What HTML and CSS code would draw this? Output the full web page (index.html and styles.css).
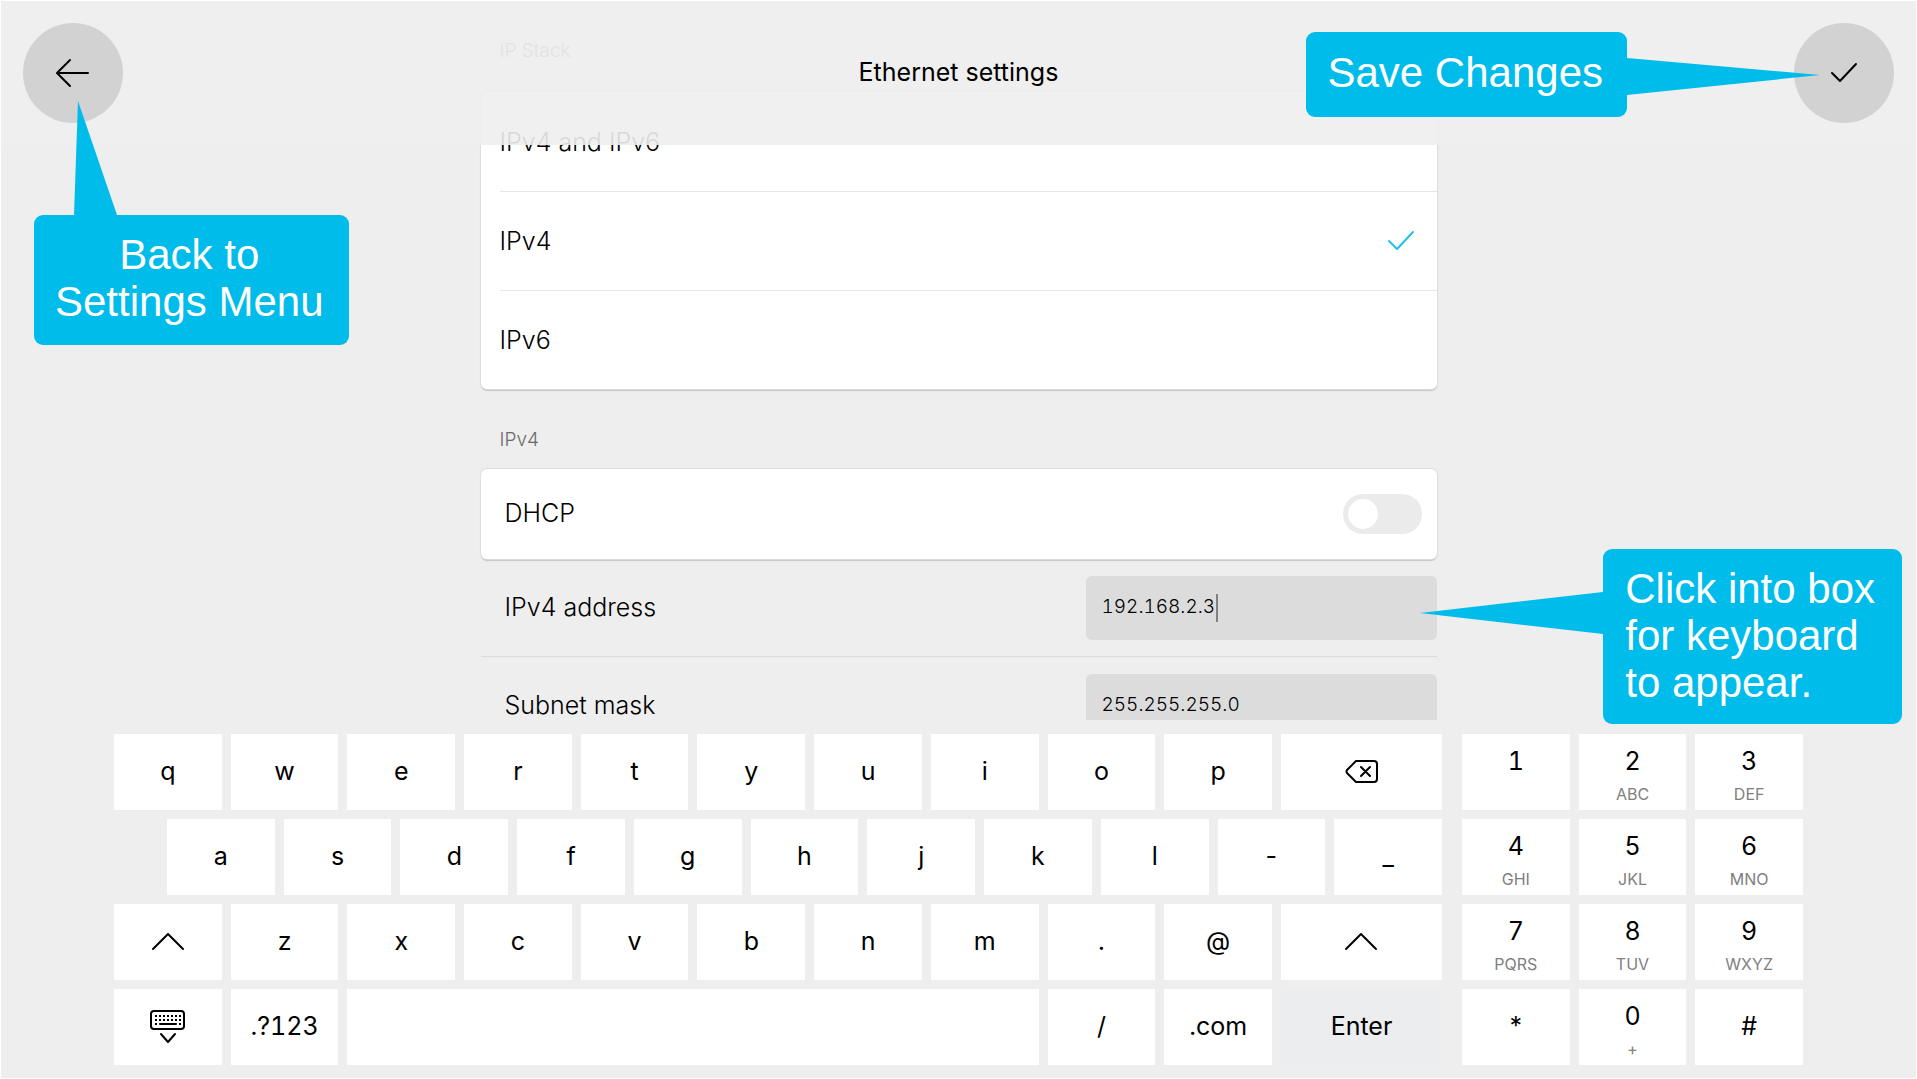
FILE: index.html
```html
<!DOCTYPE html>
<html lang="en">
<head>
<meta charset="utf-8">
<meta name="viewport" content="width=device-width, initial-scale=1">
<title>Ethernet settings</title>
<link rel="stylesheet" href="styles.css">
</head>
<body>
<div class="screen">
  <header class="topbar">
    <button class="round-button" type="button" aria-label="Back">
      <svg class="icon" width="40" height="40" viewBox="0 0 40 40"><path d="M35 20H5M17 7L4 20l13 13"/></svg>
    </button>
    <h1 class="title">Ethernet settings</h1>
    <button class="round-button" type="button" aria-label="Save">
      <svg class="icon" width="40" height="40" viewBox="0 0 40 40"><path d="M8 20l8 8L32 11"/></svg>
    </button>
  </header>

  <main class="settings">
    <form class="column">
      <h2 class="group-label">IP Stack</h2>
      <div class="card choices">
        <label class="choice"><input class="hidden-input" type="radio" name="stack"><span class="choice-text">IPv4 and IPv6</span></label>
        <label class="choice"><input class="hidden-input" type="radio" name="stack" checked><span class="choice-text">IPv4</span>
          <svg class="icon tick" width="40" height="40" viewBox="0 0 40 40"><path d="M8 20l8 8L32 11"/></svg></label>
        <label class="choice"><input class="hidden-input" type="radio" name="stack"><span class="choice-text">IPv6</span></label>
      </div>
      <h2 class="group-label">IPv4</h2>
      <div class="card toggle-row">
        <label class="row-label" for="dhcp">DHCP</label>
        <input class="toggle" id="dhcp" type="checkbox">
      </div>
      <div class="field-row">
        <label class="row-label" for="address">IPv4 address</label>
        <div class="field"><input class="field-input" id="address" type="text" value="192.168.2.3"><span class="caret"></span></div>
      </div>
      <div class="field-row">
        <label class="row-label" for="mask">Subnet mask</label>
        <div class="field"><input class="field-input" id="mask" type="text" value="255.255.255.0"></div>
      </div>
    </form>
  </main>

  <section class="keyboard" aria-label="Keyboard">
    <div class="letters">
      <div class="key-row">
        <button class="key">q</button><button class="key">w</button><button class="key">e</button><button class="key">r</button><button class="key">t</button><button class="key">y</button><button class="key">u</button><button class="key">i</button><button class="key">o</button><button class="key">p</button>
        <button class="key" aria-label="Backspace"><svg class="icon" width="40" height="40" viewBox="0 0 40 40"><path d="M15 10H33a3 3 0 0 1 3 3V28a3 3 0 0 1-3 3H15L6 22Q5 20.500 6 19ZM20 16l9 9M29 16L20 25"/></svg></button>
      </div>
      <div class="key-row key-row-inset">
        <button class="key">a</button><button class="key">s</button><button class="key">d</button><button class="key">f</button><button class="key">g</button><button class="key">h</button><button class="key">j</button><button class="key">k</button><button class="key">l</button><button class="key">-</button><button class="key">_</button>
      </div>
      <div class="key-row">
        <button class="key" aria-label="Shift"><svg class="icon" width="40" height="40" viewBox="0 0 40 40"><path d="M5 28L20 13l15 15"/></svg></button>
        <button class="key">z</button><button class="key">x</button><button class="key">c</button><button class="key">v</button><button class="key">b</button><button class="key">n</button><button class="key">m</button><button class="key">.</button><button class="key">@</button>
        <button class="key" aria-label="Shift"><svg class="icon" width="40" height="40" viewBox="0 0 40 40"><path d="M5 28L20 13l15 15"/></svg></button>
      </div>
      <div class="key-row">
        <button class="key" aria-label="Hide keyboard"><svg class="icon" width="40" height="40" viewBox="0 0 40 40"><rect x="3" y="5" width="33" height="18" rx="3"/><path d="M13 28l7 8 7-8M12 18H28"/><path class="dots" d="M7 10H34M7 14H34M7 18H10M31 18H34"/></svg></button>
        <button class="key">.?123</button><button class="key key-space" aria-label="Space"></button><button class="key">/</button><button class="key">.com</button><button class="key key-enter">Enter</button>
      </div>
    </div>
    <div class="numbers">
      <button class="key key-number">1</button>
      <button class="key key-number">2<small class="sub">ABC</small></button>
      <button class="key key-number">3<small class="sub">DEF</small></button>
      <button class="key key-number">4<small class="sub">GHI</small></button>
      <button class="key key-number">5<small class="sub">JKL</small></button>
      <button class="key key-number">6<small class="sub">MNO</small></button>
      <button class="key key-number">7<small class="sub">PQRS</small></button>
      <button class="key key-number">8<small class="sub">TUV</small></button>
      <button class="key key-number">9<small class="sub">WXYZ</small></button>
      <button class="key">*</button>
      <button class="key key-number">0<small class="sub">+</small></button>
      <button class="key">#</button>
    </div>
  </section>

  <aside class="callout callout-back">Back to<br>Settings Menu
    <svg class="tail" width="43" height="114" viewBox="0 0 43 114"><path d="M0 114L4 0 43 114Z"/></svg></aside>
  <aside class="callout callout-save">Save Changes
    <svg class="tail" width="193" height="37" viewBox="0 0 193 37"><path d="M0 0L193 17 0 37Z"/></svg></aside>
  <aside class="callout callout-box">Click into box<br>for keyboard<br>to appear.
    <svg class="tail" width="183" height="42" viewBox="0 0 183 42"><path d="M183 0L0 21 183 42Z"/></svg></aside>
</div>
</body>
</html>
```
FILE: styles.css
```css
* { box-sizing: border-box; }

body {
  margin: 0;
  background: #eee;
  color: #000;
  font: 300 25px/32px Inter, "Liberation Sans", sans-serif;
}

button, input {
  margin: 0;
  border: 0;
  border-radius: 0;
  color: inherit;
  font: inherit;
}

.screen {
  position: relative;
  display: flex;
  flex-direction: column;
  height: 100vh;
  overflow: hidden;
}

.screen::after {
  content: "";
  position: absolute;
  inset: 0;
  border: 1px solid #fff;
  pointer-events: none;
}

.icon {
  fill: none;
  stroke: currentColor;
  stroke-width: 2;
  stroke-linecap: round;
  stroke-linejoin: round;
}

.topbar {
  position: absolute;
  inset: 0 0 auto;
  display: flex;
  justify-content: space-between;
  align-items: center;
  height: 145px;
  padding: 0 23px;
  background: rgba(238, 238, 238, 0.9);
}

.round-button {
  display: grid;
  place-items: center;
  width: 100px;
  height: 100px;
  padding: 0;
  border-radius: 50%;
  background: #d2d2d2;
}

.title {
  margin: 0;
  padding-bottom: 2px;
  font: inherit;
  font-weight: 400;
}

.settings {
  flex: 1;
  min-height: 0;
  overflow: hidden;
}

.column {
  width: 956px;
  max-width: 100%;
  margin: 0 auto;
}

.group-label {
  height: 80px;
  margin: 0;
  padding: 35px 19px 13px;
  color: #6a6a6a;
  font-size: 19px;
  font-weight: inherit;
}

.card {
  border-radius: 6px;
  background: #fff;
  box-shadow: 0 0 1px 1px #ddd, 0 2px 1px #c4c4c4;
}

.choices { margin-top: 12px; }

.choice {
  display: flex;
  justify-content: space-between;
  align-items: center;
  height: 99px;
  margin-left: 19px;
  padding-right: 16px;
}

.choice + .choice { border-top: 1px solid #e6e6e6; }

.choice-text { flex: 1; }

.row-label { padding-bottom: 2px; }

.hidden-input {
  position: absolute;
  opacity: 0;
}

.tick { color: #1fc0ea; }

.toggle-row {
  display: flex;
  justify-content: space-between;
  align-items: center;
  height: 90px;
  padding: 0 15px 0 24px;
}

.toggle {
  appearance: none;
  display: flex;
  width: 79px;
  height: 40px;
  padding: 5px;
  border-radius: 20px;
  background: #ebebeb;
}

.toggle::before {
  content: "";
  width: 30px;
  height: 30px;
  border-radius: 50%;
  background: #fff;
}

.field-row {
  display: flex;
  justify-content: space-between;
  align-items: center;
  height: 98px;
  padding-left: 24px;
  border-bottom: 1px solid #dadada;
}

.field { position: relative; width: 351px; }

.field-input {
  width: 100%;
  height: 64px;
  padding: 0 16px 2px;
  border-radius: 6px;
  background: #dcdcdc;
  font-size: 19px;
  font-variant-numeric: tabular-nums;
}

.caret {
  position: absolute;
  top: 18px;
  left: 130px;
  width: 2px;
  height: 28px;
  background: #808080;
}

.keyboard {
  display: flex;
  gap: 20px;
  padding: 14px 114px;
}

.letters {
  display: grid;
  flex: 1;
  gap: 9px;
}

.key-row {
  display: grid;
  grid-template-columns: repeat(10, 1fr) 161px;
  gap: 9px;
}

.key-row-inset {
  grid-template-columns: repeat(11, 1fr);
  padding-left: 53px;
}

.key {
  display: flex;
  flex-direction: column;
  justify-content: center;
  align-items: center;
  min-width: 0;
  height: 76px;
  padding: 0 0 2px;
  background: #fff;
  font-weight: 400;
  font-variant-numeric: tabular-nums;
}

.key-space { grid-column: span 6; }

.key-enter { background: #ecedef; }

.dots { stroke-dasharray: 2 2; stroke-linecap: butt; }

.numbers {
  display: grid;
  grid-template-columns: repeat(3, 1fr);
  gap: 9px;
  width: 341px;
}

.key-number {
  justify-content: flex-start;
  padding-top: 11px;
}

.sub {
  color: #808080;
  font-size: 16px;
  line-height: 34px;
}

.callout {
  position: absolute;
  border-radius: 9px;
  background: #00bceb;
  color: #fff;
  font: 42px/47px "Liberation Sans", Arial, sans-serif;
  white-space: nowrap;
}

.tail { position: absolute; fill: #00bceb; }

.callout-back { top: 215px; left: 34px; padding: 16px 25px 20px 21px; text-align: center; }
.callout-back .tail { bottom: 100%; left: 40px; }

.callout-save { top: 32px; right: 290px; padding: 17px 24px 21px 21px; }
.callout-save .tail { top: 26px; left: 100%; }

.callout-box { top: 549px; right: 15px; padding: 16px 27px 18px 22px; }
.callout-box .tail { top: 43px; right: 100%; }
```
